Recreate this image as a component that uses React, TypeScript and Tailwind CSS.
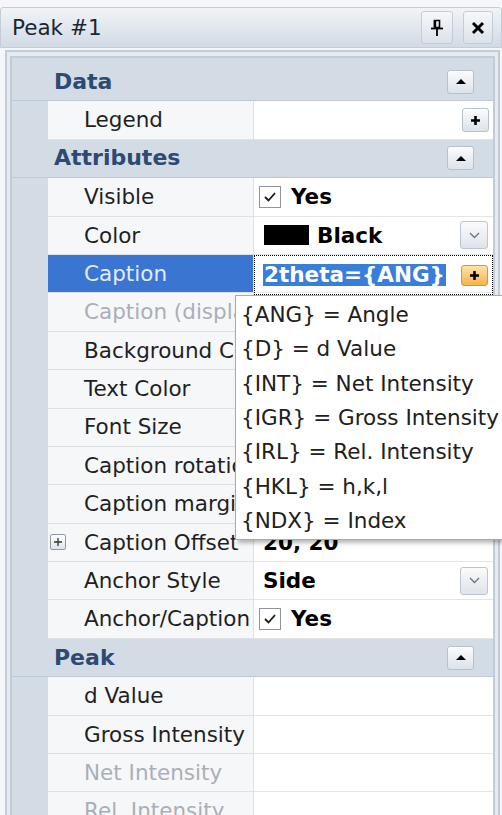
import type { ReactNode } from 'react';

type Prop = {
  label: string;
  value?: ReactNode;
  muted?: boolean;
  selected?: boolean;
  expandable?: boolean;
};

type Group = { title: string; props: Prop[] };

function SmallButton({ children, hot = false }: { children: ReactNode; hot?: boolean }) {
  return (
    <div
      className={
        hot
          ? 'flex h-[21px] w-[27px] items-center justify-center rounded-[3px] border border-[#d5953e] bg-gradient-to-b from-[#ffe3a6] to-[#f7b24d]'
          : 'flex h-[24px] w-[27px] items-center justify-center rounded-[3px] border border-[#b7c1cd] bg-gradient-to-b from-[#fbfcfd] to-[#dce3eb] shadow-[inset_0_1px_0_#fff]'
      }
    >
      {children}
    </div>
  );
}

const UpArrow = () => <div className="h-0 w-0 border-x-[5px] border-b-[5px] border-x-transparent border-b-black" />;

const PlusGlyph = () => (
  <svg width="11" height="11" viewBox="0 0 11 11">
    <path d="M5.5 1v9M1 5.5h9" stroke="#000" strokeWidth="2.6" />
  </svg>
);

const ChevronDown = () => (
  <svg width="11" height="7" viewBox="0 0 11 7">
    <path d="M1 1l4.5 4.5L10 1" stroke="#6b7480" strokeWidth="1.3" fill="none" />
  </svg>
);

function CheckValue() {
  return (
    <div className="flex h-full items-center gap-[10px] pl-[5px]">
      <div className="flex h-[22px] w-[22px] items-center justify-center border border-[#8d949c] bg-white">
        <svg width="14" height="12" viewBox="0 0 14 12">
          <path d="M2 6l3.5 3.5L12 2" stroke="#1a1a1a" strokeWidth="1.8" fill="none" />
        </svg>
      </div>
      <span className="font-bold text-black">Yes</span>
    </div>
  );
}

function DropButton() {
  return (
    <div className="flex h-[28px] w-[28px] items-center justify-center rounded-[3px] border border-[#bcc5d0] bg-gradient-to-b from-[#fafbfc] to-[#dfe4ea]">
      <ChevronDown />
    </div>
  );
}

function TextValue({ text, dropdown = false }: { text: string; dropdown?: boolean }) {
  return (
    <div className="flex h-full w-full items-center justify-between pl-[9px] pr-[5px]">
      <span className="font-bold text-black">{text}</span>
      {dropdown && <DropButton />}
    </div>
  );
}

function ColorValue() {
  return (
    <div className="flex h-full w-full items-center justify-between pl-[10px] pr-[5px]">
      <div className="flex items-center gap-[8px]">
        <div className="h-[20px] w-[45px] bg-black" />
        <span className="font-bold text-black">Black</span>
      </div>
      <DropButton />
    </div>
  );
}

const tokens = [
  '{ANG} = Angle',
  '{D} = d Value',
  '{INT} = Net Intensity',
  '{IGR} = Gross Intensity',
  '{IRL} = Rel. Intensity',
  '{HKL} = h,k,l',
  '{NDX} = Index',
];

function CaptionEditor() {
  return (
    <div className="relative flex h-[calc(100%+3px)] w-full items-center justify-between border border-dotted border-black pl-[8px] pr-[4px]">
      <span className="bg-[#3a7edb] px-px font-bold text-white">2theta={'{ANG}'}</span>
      <SmallButton hot>
        <PlusGlyph />
      </SmallButton>
      {/* token list dropped open under the caption editor */}
      <div className="absolute left-[-20px] top-[calc(100%+1px)] z-10 w-[268px] border border-[#a3abb5] bg-white py-px shadow-[3px_3px_4px_rgba(0,0,0,0.28)]">
        {tokens.map((t) => (
          <div key={t} className="flex h-[34.4px] items-center whitespace-nowrap pl-[5px] text-[#202020]">
            {t}
          </div>
        ))}
      </div>
    </div>
  );
}

const groups: Group[] = [
  {
    title: 'Data',
    props: [
      {
        label: 'Legend',
        value: (
          <div className="flex h-full items-center justify-end pr-[4px]">
            <SmallButton>
              <PlusGlyph />
            </SmallButton>
          </div>
        ),
      },
    ],
  },
  {
    title: 'Attributes',
    props: [
      { label: 'Visible', value: <CheckValue /> },
      { label: 'Color', value: <ColorValue /> },
      { label: 'Caption', selected: true, value: <CaptionEditor /> },
      { label: 'Caption (display)', muted: true },
      { label: 'Background Color' },
      { label: 'Text Color' },
      { label: 'Font Size' },
      { label: 'Caption rotation' },
      { label: 'Caption margin' },
      { label: 'Caption Offset', expandable: true, value: <TextValue text="20, 20" /> },
      { label: 'Anchor Style', value: <TextValue text="Side" dropdown /> },
      { label: 'Anchor/Caption Line', value: <CheckValue /> },
    ],
  },
  {
    title: 'Peak',
    props: [
      { label: 'd Value' },
      { label: 'Gross Intensity' },
      { label: 'Net Intensity', muted: true },
      { label: 'Rel. Intensity', muted: true },
    ],
  },
];

function GroupRow({ title }: { title: string }) {
  return (
    <div className="flex h-[38.4px] shrink-0 items-center justify-between border-b border-[#bfc9d5] pl-[42px] pr-[19px]">
      <span className="text-[22px] font-bold text-[#2c4a72]">{title}</span>
      <SmallButton>
        <UpArrow />
      </SmallButton>
    </div>
  );
}

function PropRow({ prop }: { prop: Prop }) {
  const labelTone = prop.selected
    ? 'bg-[#3a76d1] text-[#e2ecff]'
    : prop.muted
      ? 'bg-[#f6f7f9] text-[#a9afb7]'
      : 'bg-[#f6f7f9] text-[#1f1f1f]';
  return (
    <div className="flex h-[38.4px] shrink-0">
      <div className="w-[36px] shrink-0" />
      <div
        className={`relative flex w-[206px] shrink-0 items-center overflow-hidden whitespace-nowrap border-b border-r border-[#dde1e6] pl-[36px] ${labelTone}`}
      >
        {prop.expandable && (
          <div className="absolute left-[2px] top-1/2 flex h-[16px] w-[16px] -translate-y-1/2 items-center justify-center rounded-[2px] border border-[#8f9aa7] bg-gradient-to-b from-white to-[#dfe4ea]">
            <svg width="10" height="10" viewBox="0 0 10 10">
              <path d="M5 1v8M1 5h8" stroke="#333" strokeWidth="1.3" />
            </svg>
          </div>
        )}
        {prop.label}
      </div>
      <div className={`relative flex-1 border-b border-[#e2e5e9] bg-white ${prop.selected ? 'z-10' : ''}`}>
        {prop.value}
      </div>
    </div>
  );
}

export default function App() {
  return (
    <div className="flex h-[815px] w-[502px] flex-col overflow-hidden bg-[#f4f6f9] pt-[7px] font-['DejaVu_Sans',sans-serif] text-[21.5px] leading-none">
      <div className="flex h-[41px] shrink-0 items-center justify-between rounded-t-[3px] border border-[#c3ccd7] bg-gradient-to-b from-[#f1f4f7] to-[#d2dae4] pl-[11px] pr-[8px]">
        <span className="text-[#1c2633]">Peak #1</span>
        <div className="flex items-center gap-[10px]">
          <div className="flex h-[33px] w-[32px] items-center justify-center rounded-[3px] border border-[#c3ccd7] bg-gradient-to-b from-[#f6f8fa] to-[#dbe2ea]">
            <svg width="14" height="18" viewBox="0 0 14 18">
              <path d="M4.5 1.5h5v7h-5z" stroke="#000" strokeWidth="1.6" fill="none" />
              <path d="M5 1.5v7" stroke="#000" strokeWidth="2.4" />
              <path d="M1 9.5h12" stroke="#000" strokeWidth="1.8" />
              <path d="M7 10v7" stroke="#000" strokeWidth="1.8" />
            </svg>
          </div>
          <div className="flex h-[33px] w-[30px] items-center justify-center rounded-[3px] border border-[#c3ccd7] bg-gradient-to-b from-[#f6f8fa] to-[#dbe2ea]">
            <svg width="14" height="14" viewBox="0 0 14 14">
              <path d="M2 2l10 10M12 2L2 12" stroke="#000" strokeWidth="3" />
            </svg>
          </div>
        </div>
      </div>

      <div className="ml-[5px] mr-[2px] mt-[2px] flex min-h-0 flex-1 flex-col border-x-2 border-t-2 border-[#c2ccd8] bg-[#e6ebf1] px-[3px] pt-[4px]">
        <div className="flex min-h-0 flex-1 flex-col border-x-2 border-t-2 border-[#c2ccd8] bg-[#d3dbe5] pt-[5px]">
          {groups.map((g) => (
            <div key={g.title} className="flex flex-col">
              <GroupRow title={g.title} />
              {g.props.map((p) => (
                <PropRow key={p.label} prop={p} />
              ))}
            </div>
          ))}
        </div>
      </div>
    </div>
  );
}
